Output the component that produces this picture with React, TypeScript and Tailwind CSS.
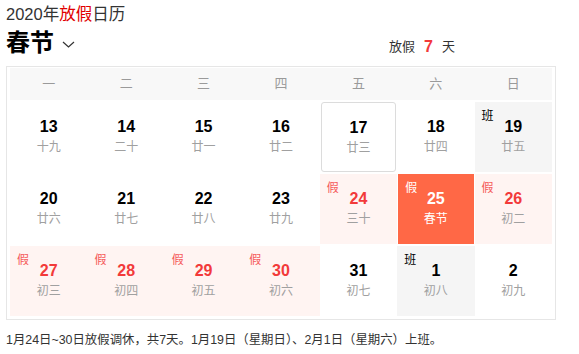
import React from "react";

type Day = {
  day: number;
  lunar: string;
  tag?: "假" | "班";
  kind?: "holiday" | "main" | "work" | "today";
};

const weekdays = ["一", "二", "三", "四", "五", "六", "日"];

const days: Day[] = [
  { day: 13, lunar: "十九" },
  { day: 14, lunar: "二十" },
  { day: 15, lunar: "廿一" },
  { day: 16, lunar: "廿二" },
  { day: 17, lunar: "廿三", kind: "today" },
  { day: 18, lunar: "廿四" },
  { day: 19, lunar: "廿五", tag: "班", kind: "work" },
  { day: 20, lunar: "廿六" },
  { day: 21, lunar: "廿七" },
  { day: 22, lunar: "廿八" },
  { day: 23, lunar: "廿九" },
  { day: 24, lunar: "三十", tag: "假", kind: "holiday" },
  { day: 25, lunar: "春节", tag: "假", kind: "main" },
  { day: 26, lunar: "初二", tag: "假", kind: "holiday" },
  { day: 27, lunar: "初三", tag: "假", kind: "holiday" },
  { day: 28, lunar: "初四", tag: "假", kind: "holiday" },
  { day: 29, lunar: "初五", tag: "假", kind: "holiday" },
  { day: 30, lunar: "初六", tag: "假", kind: "holiday" },
  { day: 31, lunar: "初七" },
  { day: 1, lunar: "初八", tag: "班", kind: "work" },
  { day: 2, lunar: "初九" },
];

function DayCell({ d }: { d: Day }) {
  const bg =
    d.kind === "holiday"
      ? "bg-[#fff4f2]"
      : d.kind === "main"
        ? "bg-[#ff6846] mx-[1px]"
        : d.kind === "work"
          ? "bg-[#f5f5f5]"
          : d.kind === "today"
            ? "border border-[#dcdcdc] rounded-[3px] mx-[1px]"
            : "";
  const numColor =
    d.kind === "main"
      ? "text-white"
      : d.kind === "holiday"
        ? "text-[#f23a3a]"
        : "text-black";
  const lunarColor = d.kind === "main" ? "text-white" : "text-[#a0a0a0]";
  const tagColor =
    d.kind === "main"
      ? "text-white"
      : d.tag === "假"
        ? "text-[#f55a5a]"
        : "text-black";

  return (
    <div className={`relative h-[70px] flex flex-col items-center pt-[15px] ${bg}`}>
      {d.tag && (
        <span className={`absolute top-[7px] left-[7px] text-[12px] leading-[14px] ${tagColor}`}>
          {d.tag}
        </span>
      )}
      <span className={`text-[16px] leading-[20px] font-bold ${numColor}`}>{d.day}</span>
      <span className={`mt-[2px] text-[12px] leading-[16px] ${lunarColor}`}>{d.lunar}</span>
    </div>
  );
}

export default function App() {
  return (
    <div
      className="w-[579px] h-[354px] bg-white text-[#333] overflow-hidden"
      style={{ fontFamily: '"Liberation Sans", "Noto Sans CJK SC", sans-serif' }}
    >
      <div className="pl-[6px] pt-[4px] text-[16.5px] leading-[20px]">
        2020年<span className="text-[#e10000]">放假</span>日历
      </div>

      <div className="flex items-end justify-between pl-[6px] pr-[124px] mt-[4px]">
        <div className="flex items-center">
          <span className="text-[24px] leading-[30px] font-bold text-black">春节</span>
          <svg width="13" height="7" viewBox="0 0 13 7" className="ml-[8px] mt-[2px]">
            <path d="M1 1 L6.5 6 L12 1" fill="none" stroke="#333" strokeWidth="1.2" />
          </svg>
        </div>
        <div className="flex items-center gap-[9px] text-[13px] leading-[20px] mb-[1px]">
          <span>放假</span>
          <span className="text-[16px] font-bold text-[#f23a3a]">7</span>
          <span>天</span>
        </div>
      </div>

      <div className="ml-[6px] mt-[8px] w-[550px] border border-[#e6e6e6] px-[3px] pt-[1px] pb-[3px]">
        <div className="grid grid-cols-7 h-[32px] bg-[#f8f8f8] mb-[2px]">
          {weekdays.map((w) => (
            <div key={w} className="flex items-center justify-center text-[13px] text-[#9a9a9a]">
              {w}
            </div>
          ))}
        </div>
        <div className="grid grid-cols-7 gap-y-[2px]">
          {days.map((d) => (
            <DayCell key={`${d.day}-${d.lunar}`} d={d} />
          ))}
        </div>
      </div>

      <div className="pl-[6px] mt-[11px] text-[12.4px] leading-[18px] text-[#333]">
        1月24日~30日放假调休，共7天。1月19日（星期日）、2月1日（星期六）上班。
      </div>
    </div>
  );
}
